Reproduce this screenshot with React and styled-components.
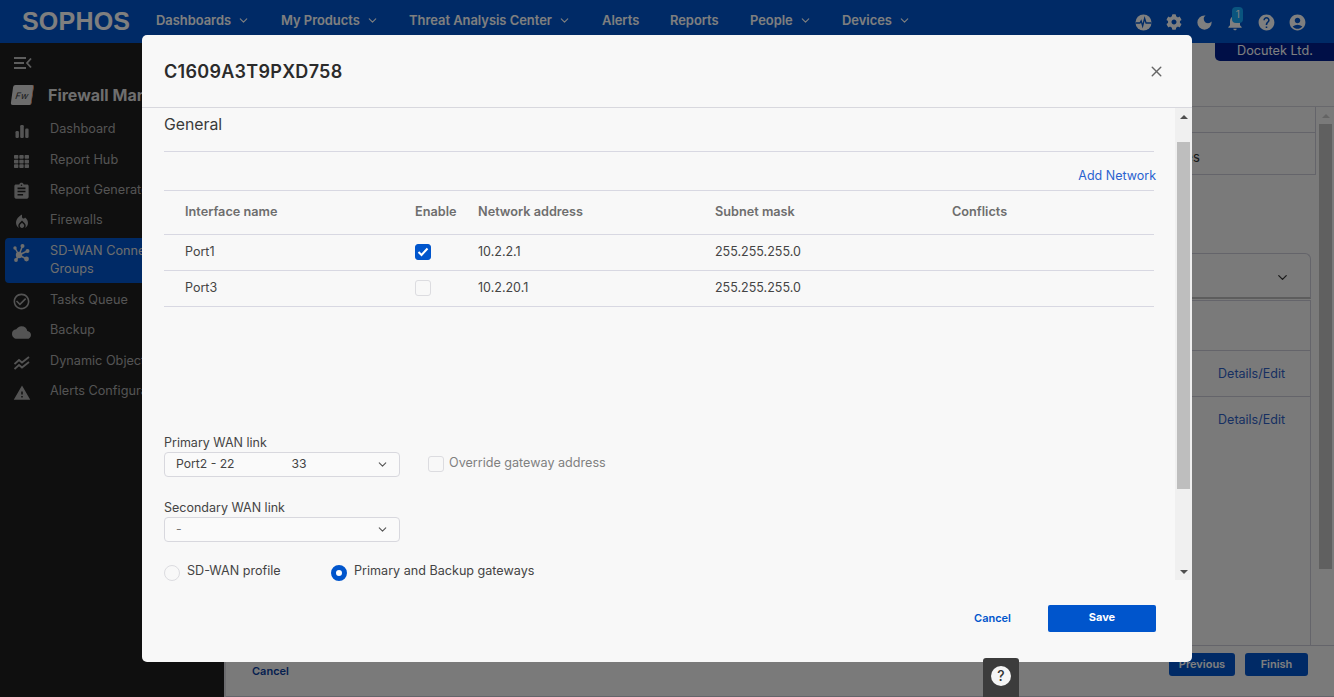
import React from 'react';
import styled, { createGlobalStyle } from 'styled-components';
import { FaCog, FaTh } from 'react-icons/fa';
import {
  MdDarkMode, MdNotifications, MdHelp, MdAccountCircle, MdAssignment, MdLocalFireDepartment,
  MdCheckCircleOutline, MdCloud, MdWarning,
} from 'react-icons/md';
import { FiChevronDown, FiX } from 'react-icons/fi';

const GlobalStyle = createGlobalStyle`
  html, body { margin: 0; padding: 0; height: 100%; overflow: hidden; }
  body { font-family: Inter, "Liberation Sans", sans-serif; font-size: 13px; color: #333; background: #f4f4f4; }
  * { box-sizing: border-box; }
`;

const PulseIcon = () => (
  <svg width="17" height="17" viewBox="0 0 18 18">
    <circle cx="9" cy="9" r="8.500" fill="currentColor" />
    <path d="M0.500 9.500h4.700l1.300-2.200 1.600 5.400 2.100-8 1.500 4.800h5.800" fill="none" stroke="#0055cc" strokeWidth="1.400" />
  </svg>
);

const BarsIcon = () => (
  <svg width="14" height="13" viewBox="0 0 14 13" fill="currentColor">
    <rect x="0.500" y="6" width="3.400" height="7" rx="1.200" />
    <rect x="5.200" y="0" width="3.600" height="13" rx="1.200" />
    <rect x="10.200" y="3.500" width="3.400" height="9.500" rx="1.200" />
  </svg>
);

const HubIcon = () => (
  <svg width="17" height="18" viewBox="0 0 17 18" fill="currentColor" stroke="currentColor">
    <circle cx="6" cy="11" r="3.200" stroke="none" />
    <circle cx="2" cy="4" r="1.700" stroke="none" />
    <circle cx="9.500" cy="2" r="2" stroke="none" />
    <circle cx="14.500" cy="7" r="2" stroke="none" />
    <circle cx="13.500" cy="15" r="2.400" stroke="none" />
    <circle cx="3" cy="16" r="1.900" stroke="none" />
    <path d="M6 11 2 4M6 11 9.500 2M6 11l8.500-4M6 11l7.500 4M6 11l-3 5" fill="none" strokeWidth="1.500" />
  </svg>
);

const TrendIcon = () => (
  <svg width="16" height="14" viewBox="0 0 16 14" fill="none" stroke="currentColor" strokeWidth="1.800">
    <path d="M0.500 8 5 4l3 2.500L15 1" />
    <path d="M0.500 13 5 9l3 2.500L15 6" />
  </svg>
);

const CollapseIcon = () => (
  <svg width="18" height="12" viewBox="0 0 18 12" fill="none" stroke="currentColor" strokeWidth="1.800">
    <path d="M0 1h12M0 6h10M0 11h12M17 1.500 13 6l4 4.500" />
  </svg>
);

const navItems = [
  { label: 'Dashboards', width: 125, menu: true },
  { label: 'My Products', width: 128, menu: true },
  { label: 'Threat Analysis Center', width: 193, menu: true },
  { label: 'Alerts', width: 68 },
  { label: 'Reports', width: 80 },
  { label: 'People', width: 92, menu: true },
  { label: 'Devices', width: 80, menu: true },
];

const sideItems = [
  { label: 'Dashboard', icon: <BarsIcon /> },
  { label: 'Report Hub', icon: <FaTh size={15} /> },
  { label: 'Report Generator', icon: <MdAssignment size={19} /> },
  { label: 'Firewalls', icon: <MdLocalFireDepartment size={18} /> },
  { label: 'SD-WAN Connection Groups', icon: <HubIcon />, active: true },
  { label: 'Tasks Queue', icon: <MdCheckCircleOutline size={19} /> },
  { label: 'Backup', icon: <MdCloud size={19} /> },
  { label: 'Dynamic Objects', icon: <TrendIcon /> },
  { label: 'Alerts Configuration', icon: <MdWarning size={18} /> },
];

const ports = [
  { name: 'Port1', enabled: true, address: '10.2.2.1', mask: '255.255.255.0' },
  { name: 'Port3', enabled: false, address: '10.2.20.1', mask: '255.255.255.0' },
];

export default function App() {
  return (
    <>
      <GlobalStyle />
      <Page>
        <Header>
          <Logo>SOPHOS</Logo>
          <Nav>
            {navItems.map((item) => (
              <NavItem key={item.label} $width={item.width}>
                {item.label}
                {item.menu && <FiChevronDown size={13} />}
              </NavItem>
            ))}
          </Nav>
          <HeaderIcons>
            <HeaderIcon><PulseIcon /></HeaderIcon>
            <HeaderIcon><FaCog size={16} /></HeaderIcon>
            <HeaderIcon><MdDarkMode size={19} /></HeaderIcon>
            <HeaderIcon>
              <MdNotifications size={20} />
              <Badge>1</Badge>
            </HeaderIcon>
            <HeaderIcon><MdHelp size={19} /></HeaderIcon>
            <HeaderIcon><MdAccountCircle size={19} /></HeaderIcon>
          </HeaderIcons>
        </Header>

        <Body>
          <Sidebar>
            <CollapseRow><CollapseIcon /></CollapseRow>
            <ProductRow>
              <ProductBadge><span>Fw</span></ProductBadge>
              <ProductName>Firewall Management</ProductName>
            </ProductRow>
            {sideItems.map((item) => (
              <SideItem key={item.label} $active={item.active}>
                <SideIcon $active={item.active}>{item.icon}</SideIcon>
                <span>{item.label}</span>
              </SideItem>
            ))}
          </Sidebar>

          <Main>
            <TenantBar>
              <TenantTab>Docutek Ltd.</TenantTab>
            </TenantBar>
            <WorkArea>
              <WorkContent>
                <SummaryBox>
                  <SummaryRow />
                  <SummaryRow $tall>Selected interfaces</SummaryRow>
                </SummaryBox>
                <Accordion>
                  <FiChevronDown size={15} />
                </Accordion>
                <DeviceList>
                  <DeviceRow $height={50} />
                  <DeviceRow $height={46}><DetailsLink>Details/Edit</DetailsLink></DeviceRow>
                  <DeviceRow $height={46} $last><DetailsLink>Details/Edit</DetailsLink></DeviceRow>
                </DeviceList>
              </WorkContent>
              <PageScrollbar>
                <UpArrow $color="#c8c8c8" />
                <PageThumb />
              </PageScrollbar>
            </WorkArea>
            <PageFooter>
              <FooterCancel>Cancel</FooterCancel>
              <FooterActions>
                <FooterButton $width={66}>Previous</FooterButton>
                <FooterButton $width={63}>Finish</FooterButton>
              </FooterActions>
            </PageFooter>
          </Main>
        </Body>

        <Overlay>
          <Modal>
            <ModalHead>
              <ModalTitle>C1609A3T9PXD758</ModalTitle>
              <CloseButton><FiX size={17} /></CloseButton>
            </ModalHead>

            <ModalBody>
              <ModalContent>
                <SectionTitle>General</SectionTitle>
                <AddRow><TextLink>Add Network</TextLink></AddRow>
                <TableHead>
                  <span>Interface name</span>
                  <span>Enable</span>
                  <span>Network address</span>
                  <span>Subnet mask</span>
                  <span>Conflicts</span>
                </TableHead>
                {ports.map((port) => (
                  <TableRow key={port.name}>
                    <span>{port.name}</span>
                    <Checkbox $checked={port.enabled}>
                      {port.enabled && (
                        <svg width="12" height="10" viewBox="0 0 12 10" fill="none" stroke="#fff" strokeWidth="2">
                          <path d="M1.500 5 4.500 8 10.500 1.500" />
                        </svg>
                      )}
                    </Checkbox>
                    <span>{port.address}</span>
                    <span>{port.mask}</span>
                    <span />
                  </TableRow>
                ))}

                <WanRow>
                  <Field>
                    <FieldLabel>Primary WAN link</FieldLabel>
                    <SelectBox>
                      <SelectValue>Port2 - 22<Redacted>33</Redacted></SelectValue>
                      <FiChevronDown size={13} />
                    </SelectBox>
                  </Field>
                  <OverrideOption>
                    <Checkbox />
                    <span>Override gateway address</span>
                  </OverrideOption>
                </WanRow>

                <SecondaryField>
                  <FieldLabel>Secondary WAN link</FieldLabel>
                  <SelectBox>
                    <SelectValue $muted>-</SelectValue>
                    <FiChevronDown size={13} />
                  </SelectBox>
                </SecondaryField>

                <RadioRow>
                  <RadioOption $width={167}>
                    <Radio />
                    <span>SD-WAN profile</span>
                  </RadioOption>
                  <RadioOption>
                    <Radio $checked />
                    <span>Primary and Backup gateways</span>
                  </RadioOption>
                </RadioRow>
              </ModalContent>

              <ScrollTrack>
                <UpArrow $color="#505050" />
                <ScrollThumb />
                <DownArrow />
              </ScrollTrack>
            </ModalBody>

            <ModalFooter>
              <CancelLink>Cancel</CancelLink>
              <SaveButton>Save</SaveButton>
            </ModalFooter>
          </Modal>
        </Overlay>

        <HelpTab>
          <HelpCircle>?</HelpCircle>
        </HelpTab>
      </Page>
    </>
  );
}

const Page = styled.div`
  position: relative;
  width: 1334px;
  height: 697px;
  display: flex;
  flex-direction: column;
  overflow: hidden;
`;

const Header = styled.header`
  height: 43px;
  flex: none;
  background: #0055cc;
  display: flex;
  align-items: center;
  padding-left: 22px;
  color: #fff;
`;

const Logo = styled.div`
  width: 134px;
  font-family: "Liberation Sans", sans-serif;
  font-size: 25px;
  font-weight: 700;
  letter-spacing: 0.200px;
  margin-top: -1px;
`;

const Nav = styled.nav`
  display: flex;
  margin-top: -3px;
`;

const NavItem = styled.div`
  width: ${(p) => p.$width}px;
  display: flex;
  align-items: center;
  gap: 6px;
  font-size: 12.900px;
  font-weight: 600;
  white-space: nowrap;
`;

const HeaderIcons = styled.div`
  margin-left: auto;
  padding-right: 27px;
  display: flex;
  gap: 10.800px;
  margin-top: 1px;
`;

const HeaderIcon = styled.div`
  position: relative;
  width: 20px;
  height: 20px;
  display: flex;
  align-items: center;
  justify-content: center;
`;

const Badge = styled.span`
  position: absolute;
  left: 7px;
  top: -5px;
  width: 11px;
  height: 16px;
  border-radius: 4px;
  background: #14aaff;
  font-size: 10px;
  line-height: 15px;
  text-align: center;
`;

const Body = styled.div`
  flex: 1;
  min-height: 0;
  display: flex;
`;

const Sidebar = styled.aside`
  width: 224px;
  flex: none;
  background: #1e1e1e;
  color: #a8a8a8;
  padding-left: 5px;
`;

const CollapseRow = styled.div`
  height: 37px;
  padding: 13px 0 0 9px;
  color: #bbb;
`;

const ProductRow = styled.div`
  height: 30px;
  margin-bottom: 4px;
  display: flex;
  align-items: center;
  padding-left: 7px;
  white-space: nowrap;
`;

const ProductBadge = styled.div`
  width: 21px;
  height: 20px;
  background: #d8d8d8;
  transform: skewX(-8deg);
  border-radius: 2px;
  border-right: 1px solid #e0783c;
  color: #333;
  font-size: 9px;
  font-style: italic;
  display: flex;
  align-items: center;
  justify-content: center;
  margin-right: 15px;
`;

const ProductName = styled.div`
  font-size: 16px;
  font-weight: 700;
  color: #ddd;
`;

const SideItem = styled.div`
  min-height: ${(p) => (p.$active ? '45px' : '30.400px')};
  display: flex;
  align-items: ${(p) => (p.$active ? 'flex-start' : 'center')};
  padding: ${(p) => (p.$active ? '4px 30px 5px 8px' : '0 0 0 8px')};
  margin: ${(p) => (p.$active ? '2.400px 0 1.800px' : '0')};
  line-height: 18px;
  font-size: 12.700px;
  background: ${(p) => (p.$active ? '#0055cc' : 'transparent')};
  border-radius: 4px 0 0 4px;
  color: ${(p) => (p.$active ? '#ddd' : '#a8a8a8')};
  white-space: ${(p) => (p.$active ? 'normal' : 'nowrap')};
`;

const SideIcon = styled.span`
  width: 17px;
  margin-right: 20px;
  flex: none;
  display: flex;
  justify-content: center;
  margin-top: ${(p) => (p.$active ? '2px' : '4px')};
  svg { flex: none; }
`;

const Main = styled.main`
  flex: 1;
  min-width: 0;
  display: flex;
  flex-direction: column;
  border-left: 2px solid #d8d8de;
`;

const TenantBar = styled.div`
  height: 64px;
  flex: none;
  display: flex;
  justify-content: flex-end;
  border-bottom: 1px solid #d0d0d8;
`;

const TenantTab = styled.div`
  width: 119px;
  height: 18px;
  background: #001f8f;
  color: #fff;
  border-bottom-left-radius: 5px;
  font-size: 12.700px;
  line-height: 16px;
  padding-left: 22px;
`;

const WorkArea = styled.div`
  flex: 1;
  min-height: 0;
  display: flex;
`;

const WorkContent = styled.div`
  flex: 1;
  padding-left: 14px;
  display: flex;
  flex-direction: column;
`;

const SummaryBox = styled.div`
  height: 68px;
  border: 1px solid #c8c8d4;
  border-top: none;
  margin-right: 1px;
`;

const SummaryRow = styled.div`
  height: ${(p) => (p.$tall ? '41px' : '26px')};
  border-bottom: ${(p) => (p.$tall ? 'none' : '1px solid #c8c8d4')};
  line-height: 48px;
  padding-left: 840px;
  white-space: nowrap;
`;

const Accordion = styled.div`
  height: 46px;
  margin: 78px 6px 0 0;
  border: 1px solid #c8c8d4;
  border-bottom: 2px solid #bbb;
  border-top-right-radius: 6px;
  display: flex;
  align-items: center;
  justify-content: flex-end;
  padding: 4px 20px 0 0;
`;

const DeviceList = styled.div`
  flex: 1;
  margin: 1px 6px 0 0;
  border: 1px solid #c8c8d4;
  border-bottom: none;
`;

const DeviceRow = styled.div`
  height: ${(p) => p.$height}px;
  border-bottom: ${(p) => (p.$last ? 'none' : '1px solid #c8c8d4')};
  padding-bottom: ${(p) => (p.$last ? '2px' : '0')};
  display: flex;
  align-items: center;
  justify-content: flex-end;
  padding-right: 25px;
`;

const DetailsLink = styled.span`
  color: #2f5fc4;
  font-size: 12.500px;
`;

const PageScrollbar = styled.div`
  width: 17px;
  flex: none;
  padding: 0 2px;
`;

const PageThumb = styled.div`
  width: 13px;
  height: 445px;
  background: #c0c0c0;
`;

const UpArrow = styled.div`
  height: 17px;
  display: flex;
  align-items: center;
  justify-content: center;
  &::before {
    content: '';
    border-left: 4px solid transparent;
    border-right: 4px solid transparent;
    border-bottom: 4px solid ${(p) => p.$color};
  }
`;

const DownArrow = styled.div`
  margin-top: auto;
  height: 17px;
  display: flex;
  align-items: center;
  justify-content: center;
  &::before {
    content: '';
    border-left: 4px solid transparent;
    border-right: 4px solid transparent;
    border-top: 4px solid #505050;
  }
`;

const PageFooter = styled.div`
  height: 52px;
  flex: none;
  border-top: 1px solid #c8c8d4;
  border-bottom: 1px solid #c8c8d4;
  display: flex;
  padding: 7px 26px 0 26px;
`;

const FooterCancel = styled.span`
  color: #0a3fa0;
  font-size: 11px;
  font-weight: 600;
  margin-top: 11px;
`;

const FooterActions = styled.div`
  margin-left: auto;
  display: flex;
  gap: 10px;
`;

const FooterButton = styled.div`
  width: ${(p) => p.$width}px;
  height: 23px;
  background: #0055cc;
  color: #fff;
  border-radius: 3px;
  font-size: 11px;
  font-weight: 600;
  display: flex;
  align-items: center;
  justify-content: center;
  padding-bottom: 2px;
`;

const Overlay = styled.div`
  position: absolute;
  inset: 0;
  background: rgba(0, 0, 0, 0.5);
  display: flex;
  justify-content: center;
  padding-top: 35px;
`;

const Modal = styled.div`
  width: 1050px;
  height: 627px;
  background: #f8f8f8;
  border-radius: 5px;
  display: flex;
  flex-direction: column;
  overflow: hidden;
`;

const ModalHead = styled.div`
  height: 73px;
  flex: none;
  border-bottom: 1px solid #d8d8de;
  display: flex;
  align-items: center;
  justify-content: space-between;
  padding: 0 27px 0 22px;
`;

const ModalTitle = styled.h2`
  margin: 0;
  font-size: 18px;
  font-weight: 600;
  letter-spacing: 0.280px;
  color: #2b2b2b;
`;

const CloseButton = styled.div`
  display: flex;
  color: #666;
`;

const ModalBody = styled.div`
  height: 472px;
  flex: none;
  display: flex;
`;

const ModalContent = styled.div`
  flex: 1;
  padding: 0 21px 0 22px;
  min-width: 0;
`;

const SectionTitle = styled.div`
  height: 44px;
  border-bottom: 1px solid #d8d8e2;
  font-size: 15.800px;
  font-weight: 400;
  line-height: 33px;
  color: #3a3a3a;
`;

const AddRow = styled.div`
  height: 38px;
  display: flex;
  justify-content: flex-end;
  align-items: center;
  margin-right: -2px;
  padding-top: 8px;
`;

const TextLink = styled.span`
  color: #2a62d0;
  font-size: 12.500px;
`;

const TableHead = styled.div`
  height: 45px;
  border-top: 1px solid #d8d8e2;
  border-bottom: 1px solid #d8d8e2;
  display: grid;
  grid-template-columns: 230px 63px 237px 237px 1fr;
  align-items: center;
  padding: 0 0 2px 21px;
  font-size: 12.700px;
  font-weight: 600;
  color: #6e6e6e;
`;

const TableRow = styled.div`
  height: 36px;
  border-bottom: 1px solid #d8d8e2;
  display: grid;
  grid-template-columns: 230px 63px 237px 237px 1fr;
  align-items: center;
  padding: 0 0 2px 21px;
  font-size: 12.500px;
  color: #444;
`;

const Checkbox = styled.span`
  width: 16px;
  height: 16px;
  flex: none;
  border-radius: 3px;
  border: 1px solid ${(p) => (p.$checked ? '#0055cc' : '#dcdce0')};
  background: ${(p) => (p.$checked ? '#0055cc' : 'transparent')};
  display: flex;
  align-items: center;
  justify-content: center;
`;

const WanRow = styled.div`
  margin-top: 129px;
  display: flex;
  align-items: flex-end;
`;

const Field = styled.div`
  width: 236px;
  display: flex;
  flex-direction: column;
`;

const SecondaryField = styled(Field)`
  margin-top: 24px;
`;

const FieldLabel = styled.label`
  font-size: 12.500px;
  line-height: 14px;
  padding-bottom: 2px;
  color: #444;
`;

const SelectBox = styled.div`
  height: 25px;
  border: 1px solid #d8d8de;
  border-radius: 4px;
  display: flex;
  align-items: center;
  justify-content: space-between;
  padding: 0 10px 0 11px;
  background: #fafafa;
  svg { color: #555; }
`;

const SelectValue = styled.span`
  font-size: 12.200px;
  padding-bottom: 2px;
  color: ${(p) => (p.$muted ? '#777' : '#444')};
`;

const Redacted = styled.span`
  margin-left: 57px;
`;

const OverrideOption = styled.div`
  margin: 0 0 1px 28px;
  height: 25px;
  display: flex;
  align-items: center;
  gap: 5px;
  font-size: 12.600px;
  color: #808080;
  span:last-child { padding-bottom: 2px; }
`;

const RadioRow = styled.div`
  margin-top: 21px;
  display: flex;
`;

const RadioOption = styled.div`
  width: ${(p) => (p.$width ? `${p.$width}px` : 'auto')};
  display: flex;
  gap: 7px;
  font-size: 12.600px;
  line-height: 16px;
  color: #444;
`;

const Radio = styled.span`
  width: 16px;
  height: 16px;
  margin-top: 2px;
  flex: none;
  border-radius: 50%;
  border: ${(p) => (p.$checked ? '5px solid #0055cc' : '1px solid #dcdce0')};
  background: ${(p) => (p.$checked ? '#fff' : 'transparent')};
`;

const ScrollTrack = styled.div`
  width: 17px;
  flex: none;
  background: #f0f0f0;
  padding: 0 2px;
  display: flex;
  flex-direction: column;
`;

const ScrollThumb = styled.div`
  width: 13px;
  height: 347px;
  margin-top: 17px;
  background: #bebebe;
`;

const ModalFooter = styled.div`
  flex: 1;
  display: flex;
  align-items: flex-start;
  justify-content: flex-end;
  padding: 25px 36px 0 0;
`;

const CancelLink = styled.span`
  color: #0055cc;
  font-size: 11px;
  font-weight: 600;
  margin: 6px 37px 0 0;
`;

const SaveButton = styled.div`
  width: 108px;
  height: 27px;
  border-radius: 2px;
  background: #0055cc;
  color: #fff;
  font-size: 11px;
  font-weight: 700;
  display: flex;
  align-items: center;
  justify-content: center;
  padding-bottom: 3px;
`;

const HelpTab = styled.div`
  position: absolute;
  left: 983px;
  top: 658px;
  width: 36px;
  height: 39px;
  background: #3c3c3c;
  border-radius: 3px 3px 0 0;
  display: flex;
  align-items: flex-start;
  justify-content: center;
  padding-top: 8px;
`;

const HelpCircle = styled.div`
  width: 20px;
  height: 20px;
  border-radius: 50%;
  background: #f5f5f5;
  color: #333;
  font-size: 14px;
  font-weight: 500;
  line-height: 20px;
  text-align: center;
`;
